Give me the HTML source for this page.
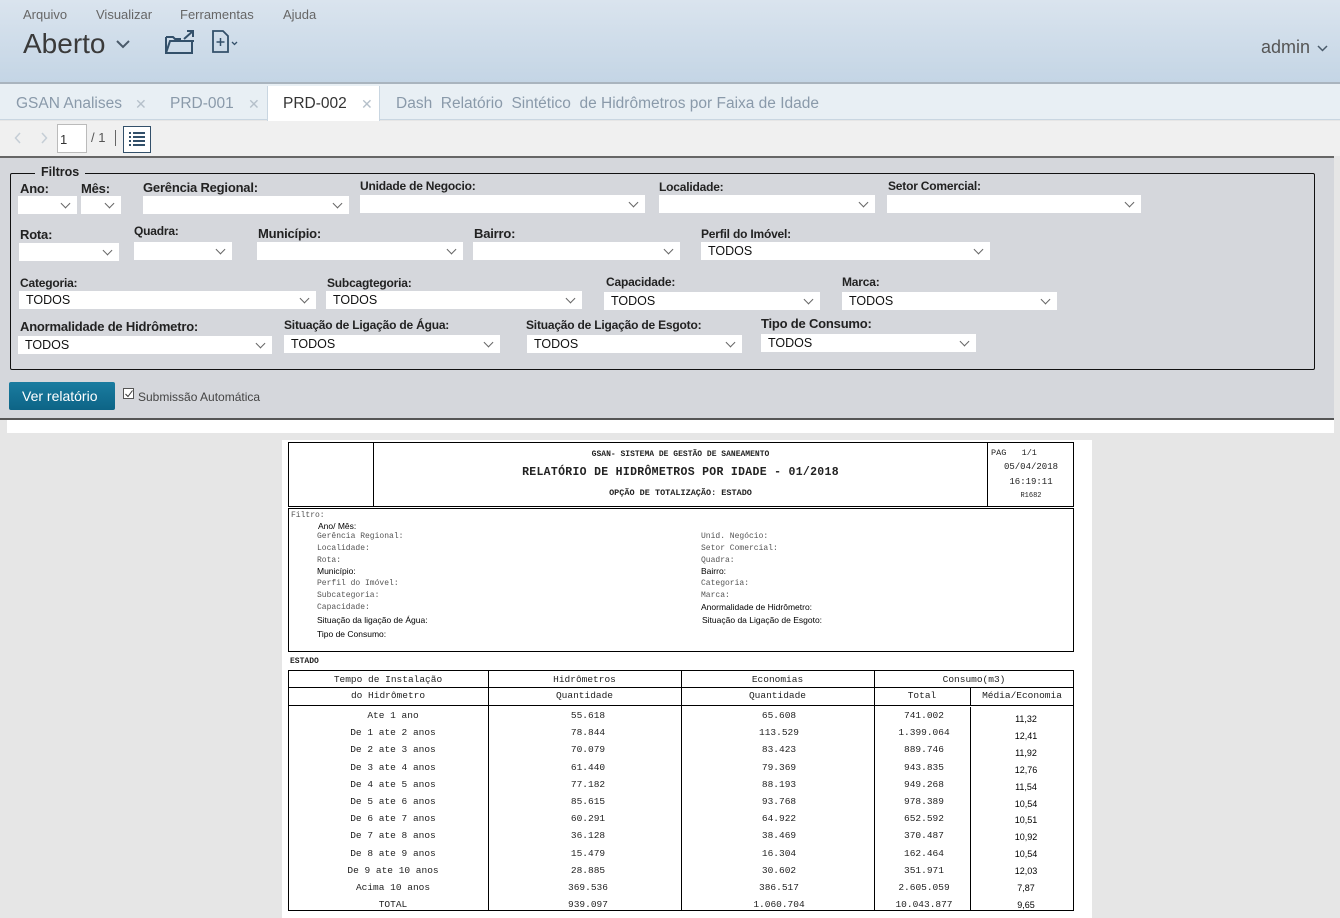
<!DOCTYPE html>
<html><head><meta charset="utf-8"><style>
*{margin:0;padding:0;box-sizing:border-box}
body{width:1340px;height:918px;overflow:hidden;position:relative;background:#e6e6e6;font-family:"Liberation Sans",sans-serif}
.a{position:absolute;white-space:nowrap}
.hdr{left:0;top:0;width:1340px;height:84px;background:linear-gradient(#dae4ee,#c4d5e5);border-bottom:2px solid #a9b4be}
.menu{font-size:13px;color:#666;top:7px}
.tabs{left:0;top:84px;width:1340px;height:36px;background:#e8eff4;border-bottom:1px solid #c9d6e1}
.tab{top:95px;font-size:15.5px;color:#8a9aaa}
.x{top:96px;font-size:14px;color:#b5c0ca}
.tb{left:0;top:121px;width:1340px;height:35px;background:#f0f0f0}
.panel{left:0;top:156px;width:1334px;height:262px;background:#d5d7dc;border-top:2px solid #666}
.fs{left:10px;top:173px;width:1305px;height:197px;border:1px solid #111;border-radius:2px}
.lb{font-size:12px;font-weight:bold;color:#222;font-family:"Liberation Sans",sans-serif;letter-spacing:-0.2px}
.sel{background:#fff;height:18px;font-size:12.5px;color:#111;padding-left:7px;line-height:18px}
.sel:after{content:"";position:absolute;right:8px;top:4px;width:6px;height:6px;border-right:1px solid #666;border-bottom:1px solid #666;transform:rotate(45deg)}
.rep{left:282px;top:440px;width:810px;height:478px;background:#fff}
.bx{border:1px solid #000}
.m{font-family:"Liberation Mono",monospace;color:#222}
.f{font-size:8px;color:#555;font-family:"Liberation Mono",monospace}
.s{font-size:8.5px;color:#000;font-family:"Liberation Sans",sans-serif}
.t{font-family:"Liberation Mono",monospace;font-size:9.5px;color:#222;text-align:center;position:absolute}
</style></head><body>
<div class="a hdr"></div>
<div class="a menu" style="left:23px">Arquivo</div>
<div class="a menu" style="left:96px">Visualizar</div>
<div class="a menu" style="left:180px">Ferramentas</div>
<div class="a menu" style="left:283px">Ajuda</div>
<div class="a" style="left:23px;top:28px;font-size:28px;color:#3a3a3a;font-weight:300">Aberto</div>
<svg class="a" style="left:116px;top:39px" width="14" height="10"><path d="M1 2 L7 8 L13 2" fill="none" stroke="#4a5a6a" stroke-width="2"/></svg>
<svg class="a" style="left:164px;top:29px" width="32" height="26"><path d="M2 8 V24 H28 V12 M2 24 L6 12 H30 M2 8 H9 L11 10 H17" fill="none" stroke="#33506a" stroke-width="2"/><path d="M20 10 L29 2 M23 2 H29 V8" fill="none" stroke="#33506a" stroke-width="2"/></svg>
<svg class="a" style="left:211px;top:30px" width="30" height="24"><path d="M2 1 H12 L17 6 V22 H2 Z" fill="none" stroke="#33506a" stroke-width="1.8"/><path d="M9.5 8 V16 M5.5 12 H13.5" stroke="#33506a" stroke-width="1.5"/><path d="M21 12 L23.5 14.5 L26 12" fill="none" stroke="#33506a" stroke-width="1.3"/></svg>
<div class="a" style="left:1261px;top:37px;font-size:18px;color:#555">admin</div>
<svg class="a" style="left:1317px;top:45px" width="11" height="8"><path d="M1 1 L5.5 5.5 L10 1" fill="none" stroke="#4a5a6a" stroke-width="1.5"/></svg>

<div class="a tabs"></div>
<div class="a" style="left:267px;top:86px;width:113px;height:35px;background:#fff;border-left:1px solid #c9d6e1;border-right:1px solid #c9d6e1"></div>
<div class="a tab" style="left:16px">GSAN Analises</div><div class="a x" style="left:135px">✕</div>
<div class="a tab" style="left:170px">PRD-001</div><div class="a x" style="left:248px">✕</div>
<div class="a tab" style="left:283px;color:#333">PRD-002</div><div class="a x" style="left:361px">✕</div>
<div class="a tab" style="left:396px">Dash&nbsp; Relatório&nbsp; Sintético&nbsp; de Hidrômetros por Faixa de Idade</div>

<div class="a tb"></div>
<svg class="a" style="left:14px;top:131px" width="36" height="14"><path d="M6 2 L1.5 7 L6 12 M28 2 L32.5 7 L28 12" fill="none" stroke="#c5ced6" stroke-width="1.5"/></svg>
<div class="a" style="left:57px;top:124px;width:30px;height:29px;background:#fff;border:1px solid #bbb;font-size:13px;padding:7px 0 0 2px;color:#333">1</div>
<div class="a" style="left:91px;top:130px;font-size:13px;color:#555">/ 1</div>
<div class="a" style="left:115px;top:130px;width:1px;height:16px;background:#666"></div>
<div class="a" style="left:123px;top:126px;width:28px;height:27px;border:1px solid #33506a;background:#fff"></div>
<svg class="a" style="left:128px;top:131px" width="18" height="16"><g stroke="#33506a" stroke-width="2"><path d="M1 2H3M5 2H17M1 6H3M5 6H17M1 10H3M5 10H17M1 14H3M5 14H17"/></g></svg>

<div class="a panel"></div>
<div class="a fs"></div>
<div class="a" style="left:35px;top:165px;padding:0 6px;background:#d5d7dc;font-size:12.5px;font-weight:bold;color:#222">Filtros</div>

<div class="a lb" style="left:20px;top:181px;font-size:13px">Ano:</div>
<div class="a lb" style="left:81px;top:181px;font-size:13px">Mês:</div>
<div class="a lb" style="left:143px;top:180px;font-size:13px">Gerência Regional:</div>
<div class="a lb" style="left:360px;top:179px">Unidade de Negocio:</div>
<div class="a lb" style="left:659px;top:180px">Localidade:</div>
<div class="a lb" style="left:888px;top:179px">Setor Comercial:</div>
<div class="a sel" style="left:18px;top:196px;width:59px"></div>
<div class="a sel" style="left:81px;top:196px;width:40px"></div>
<div class="a sel" style="left:143px;top:196px;width:206px"></div>
<div class="a sel" style="left:360px;top:195px;width:285px"></div>
<div class="a sel" style="left:659px;top:195px;width:216px"></div>
<div class="a sel" style="left:887px;top:195px;width:254px"></div>

<div class="a lb" style="left:20px;top:227px;font-size:13px">Rota:</div>
<div class="a lb" style="left:134px;top:224px">Quadra:</div>
<div class="a lb" style="left:258px;top:226px;font-size:13px">Município:</div>
<div class="a lb" style="left:474px;top:226px;font-size:13px">Bairro:</div>
<div class="a lb" style="left:701px;top:227px">Perfil do Imóvel:</div>
<div class="a sel" style="left:19px;top:243px;width:100px"></div>
<div class="a sel" style="left:134px;top:242px;width:98px"></div>
<div class="a sel" style="left:257px;top:242px;width:206px"></div>
<div class="a sel" style="left:473px;top:242px;width:207px"></div>
<div class="a sel" style="left:701px;top:242px;width:289px">TODOS</div>

<div class="a lb" style="left:20px;top:276px">Categoria:</div>
<div class="a lb" style="left:327px;top:276px">Subcagtegoria:</div>
<div class="a lb" style="left:606px;top:275px">Capacidade:</div>
<div class="a lb" style="left:842px;top:275px">Marca:</div>
<div class="a sel" style="left:19px;top:291px;width:297px">TODOS</div>
<div class="a sel" style="left:326px;top:291px;width:256px">TODOS</div>
<div class="a sel" style="left:604px;top:292px;width:216px">TODOS</div>
<div class="a sel" style="left:842px;top:292px;width:215px">TODOS</div>

<div class="a lb" style="left:20px;top:319px;font-size:13px">Anormalidade de Hidrômetro:</div>
<div class="a lb" style="left:284px;top:318px">Situação de Ligação de Água:</div>
<div class="a lb" style="left:526px;top:318px">Situação de Ligação de Esgoto:</div>
<div class="a lb" style="left:761px;top:316px;font-size:13px">Tipo de Consumo:</div>
<div class="a sel" style="left:18px;top:336px;width:254px">TODOS</div>
<div class="a sel" style="left:284px;top:335px;width:216px">TODOS</div>
<div class="a sel" style="left:527px;top:335px;width:215px">TODOS</div>
<div class="a sel" style="left:761px;top:334px;width:215px">TODOS</div>

<div class="a" style="left:9px;top:382px;width:106px;height:28px;background:linear-gradient(#1a7ca0,#0d6486);border-radius:2px;color:#fff;font-size:14px;padding:6px 0 0 13px">Ver relatório</div>
<div class="a" style="left:123px;top:388px;width:11px;height:11px;border:1px solid #555;background:#fff"></div>
<svg class="a" style="left:124px;top:389px" width="10" height="10"><path d="M1.5 5 L4 7.5 L8.5 1.5" fill="none" stroke="#333" stroke-width="1"/></svg>
<div class="a" style="left:138px;top:390px;font-size:12px;color:#444">Submissão Automática</div>
<div class="a" style="left:0;top:418px;width:1334px;height:2px;background:#555"></div>
<div class="a" style="left:7px;top:420px;width:1327px;height:13px;background:#fff"></div>

<div class="a rep"></div>
<div class="a bx" style="left:288px;top:442px;width:786px;height:65px"></div>
<div class="a" style="left:373px;top:442px;width:1px;height:65px;background:#000"></div>
<div class="a" style="left:987px;top:442px;width:1px;height:65px;background:#000"></div>
<div class="a m" style="left:374px;top:450px;width:613px;text-align:center;font-size:8px;font-weight:bold">GSAN- SISTEMA DE GESTÃO DE SANEAMENTO</div>
<div class="a m" style="left:374px;top:466px;width:613px;text-align:center;font-size:11.5px;font-weight:bold;letter-spacing:0.3px">RELATÓRIO DE HIDRÔMETROS POR IDADE - 01/2018</div>
<div class="a m" style="left:374px;top:488px;width:613px;text-align:center;font-size:8.5px;font-weight:bold">OPÇÃO DE TOTALIZAÇÃO: ESTADO</div>
<div class="a m" style="left:991px;top:448px;font-size:8.5px">PAG &nbsp;&nbsp;1/1</div>
<div class="a m" style="left:988px;top:462px;width:86px;text-align:center;font-size:9px">05/04/2018</div>
<div class="a m" style="left:988px;top:477px;width:86px;text-align:center;font-size:9px">16:19:11</div>
<div class="a m" style="left:988px;top:492px;width:86px;text-align:center;font-size:7px">R1682</div>

<div class="a bx" style="left:288px;top:508px;width:786px;height:144px"></div>
<div class="a f" style="left:291px;top:511px">Filtro:</div>
<div class="a s" style="left:318px;top:521px">Ano/ Mês:</div>
<div class="a f" style="left:317px;top:532px">Gerência Regional:</div>
<div class="a f" style="left:317px;top:544px">Localidade:</div>
<div class="a f" style="left:317px;top:556px">Rota:</div>
<div class="a s" style="left:317px;top:566px">Município:</div>
<div class="a f" style="left:317px;top:579px">Perfil do Imóvel:</div>
<div class="a f" style="left:317px;top:591px">Subcategoria:</div>
<div class="a f" style="left:317px;top:603px">Capacidade:</div>
<div class="a s" style="left:317px;top:615px">Situação da ligação de Água:</div>
<div class="a s" style="left:317px;top:629px">Tipo de Consumo:</div>
<div class="a f" style="left:701px;top:532px">Unid. Negócio:</div>
<div class="a f" style="left:701px;top:544px">Setor Comercial:</div>
<div class="a f" style="left:701px;top:556px">Quadra:</div>
<div class="a s" style="left:701px;top:566px">Bairro:</div>
<div class="a f" style="left:701px;top:579px">Categoria:</div>
<div class="a f" style="left:701px;top:591px">Marca:</div>
<div class="a s" style="left:701px;top:602px">Anormalidade de Hidrômetro:</div>
<div class="a s" style="left:702px;top:615px">Situação da Ligação de Esgoto:</div>
<div class="a m" style="left:290px;top:657px;font-size:8px;font-weight:bold">ESTADO</div>

<div class="a bx" style="left:288px;top:670px;width:786px;height:241px"></div>
<div class="a" style="left:288px;top:687px;width:786px;height:1px;background:#000"></div>
<div class="a" style="left:288px;top:705px;width:786px;height:1px;background:#000"></div>
<div class="a" style="left:488px;top:670px;width:1px;height:241px;background:#000"></div>
<div class="a" style="left:681px;top:670px;width:1px;height:241px;background:#000"></div>
<div class="a" style="left:874px;top:670px;width:1px;height:241px;background:#000"></div>
<div class="a" style="left:970px;top:687px;width:1px;height:18px;background:#000"></div>
<div class="a" style="left:970px;top:707px;width:1px;height:204px;background:#000"></div>
<div class="t" style="left:288px;width:200px;top:674px">Tempo de Instalação</div>
<div class="t" style="left:288px;width:200px;top:690px">do Hidrômetro</div>
<div class="t" style="left:488px;width:193px;top:674px">Hidrômetros</div>
<div class="t" style="left:488px;width:193px;top:690px">Quantidade</div>
<div class="t" style="left:681px;width:193px;top:674px">Economias</div>
<div class="t" style="left:681px;width:193px;top:690px">Quantidade</div>
<div class="t" style="left:874px;width:200px;top:674px">Consumo(m3)</div>
<div class="t" style="left:874px;width:96px;top:690px">Total</div>
<div class="t" style="left:970px;width:104px;top:690px">Média/Economia</div>

<div class="t" style="left:288px;width:210px;top:707px;line-height:17.2px">Ate 1 ano<br>De 1 ate 2 anos<br>De 2 ate 3 anos<br>De 3 ate 4 anos<br>De 4 ate 5 anos<br>De 5 ate 6 anos<br>De 6 ate 7 anos<br>De 7 ate 8 anos<br>De 8 ate 9 anos<br>De 9 ate 10 anos<br>Acima 10 anos<br>TOTAL</div>
<div class="t" style="left:488px;width:200px;top:707px;line-height:17.2px">55.618<br>78.844<br>70.079<br>61.440<br>77.182<br>85.615<br>60.291<br>36.128<br>15.479<br>28.885<br>369.536<br>939.097</div>
<div class="t" style="left:681px;width:196px;top:707px;line-height:17.2px">65.608<br>113.529<br>83.423<br>79.369<br>88.193<br>93.768<br>64.922<br>38.469<br>16.304<br>30.602<br>386.517<br>1.060.704</div>
<div class="t" style="left:874px;width:100px;top:707px;line-height:17.2px">741.002<br>1.399.064<br>889.746<br>943.835<br>949.268<br>978.389<br>652.592<br>370.487<br>162.464<br>351.971<br>2.605.059<br>10.043.877</div>
<div class="t" style="left:970px;width:112px;top:711px;line-height:16.9px;font-family:'Liberation Sans',sans-serif;font-size:9px;color:#000">11,32<br>12,41<br>11,92<br>12,76<br>11,54<br>10,54<br>10,51<br>10,92<br>10,54<br>12,03<br>7,87<br>9,65</div>
</body></html>
